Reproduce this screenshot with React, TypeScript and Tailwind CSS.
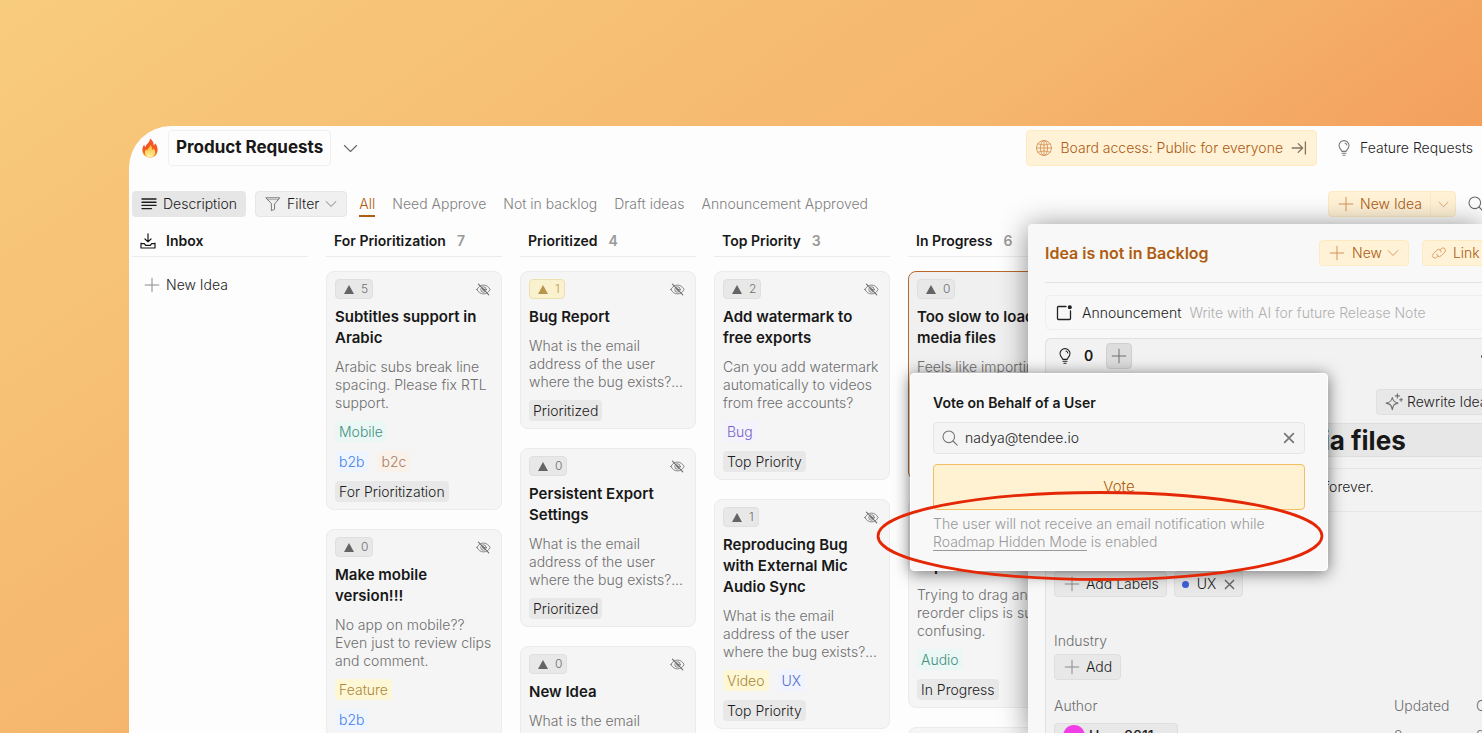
import React, { useState } from 'react';

type IconProps = { className?: string };

const Svg = ({ className = 'size-4', width = 1, children }: IconProps & { width?: number; children: React.ReactNode }) => (
  <svg
    viewBox="0 0 16 16"
    className={`shrink-0 ${className}`}
    fill="none"
    stroke="currentColor"
    strokeWidth={width}
    strokeLinecap="round"
    strokeLinejoin="round"
    aria-hidden="true"
  >
    {children}
  </svg>
);

const PlusIcon = ({ className }: IconProps) => (
  <Svg className={className}><path d="M8 1.2v13.6M1.2 8h13.6" /></Svg>
);

const ChevronIcon = ({ className }: IconProps) => (
  <Svg className={className} width={1.2}><path d="M1.5 4.8 8 11.2l6.5-6.4" /></Svg>
);

const CloseIcon = ({ className }: IconProps) => (
  <Svg className={className} width={1.9}><path d="m3 3 10 10M13 3 3 13" /></Svg>
);

const LinesIcon = ({ className }: IconProps) => (
  <Svg className={className} width={1.4}><path d="M1 3h14M1 6.2h14M1 9.4h14M1 12.6h9.5" /></Svg>
);

const FunnelIcon = ({ className }: IconProps) => (
  <Svg className={className}><path d="M1.2 1.8h13.6L9.6 8v5.2l-3.2 1.5V8z" /><path d="M2.6 3.6h10.8" strokeWidth=".5" /></Svg>
);

const InboxIcon = ({ className }: IconProps) => (
  <Svg className={className} width={1.2}>
    <path d="M8 .8v8M5 6l3 2.9L11 6M1 10v5h14v-5M1 10.6h3.4l1.2 1.8h4.8l1.2-1.8H15" />
  </Svg>
);

const GlobeIcon = ({ className }: IconProps) => (
  <Svg className={className} width={0.9}>
    <circle cx="8" cy="8" r="7.5" />
    <ellipse cx="8" cy="8" rx="3.6" ry="7.5" />
    <path d="M8 .5v15M.5 8h15M2 3.8c3.5 1.6 8.5 1.6 12 0M2 12.2c3.5-1.6 8.5-1.6 12 0" />
  </Svg>
);

const ArrowEndIcon = ({ className }: IconProps) => (
  <Svg className={className} width={1.3}><path d="M1.2 8h10.2M7.2 3.6 11.6 8l-4.4 4.4M14.4 2v12" /></Svg>
);

const BulbIcon = ({ className }: IconProps) => (
  <Svg className={className} width={1.1}>
    <path d="M5.9 11.4c0-1.6-2.9-2.6-2.9-5.8a5 5 0 0 1 10 0c0 3.2-2.9 4.2-2.9 5.8zM6 13.3h4M6.9 15.2h2.2M9.1 3.1c.9.3 1.5 1 1.6 1.9" />
  </Svg>
);

const SearchIcon = ({ className }: IconProps) => (
  <Svg className={className} width={1.1}><circle cx="6.8" cy="6.8" r="5.8" /><path d="m11 11 4.2 4.2" /></Svg>
);

const EyeOffIcon = ({ className }: IconProps) => (
  <Svg className={className} width={0.9}>
    <path d="M1 8c1.5-3 4-4.7 7-4.7S13.5 5 15 8c-1.5 3-4 4.7-7 4.7S2.5 11 1 8z" />
    <circle cx="8" cy="8" r="2.9" />
    <circle cx="8" cy="8" r="1" />
    <path d="m2.6 2.2 11 11.6" strokeWidth="1.2" />
  </Svg>
);

const LinkIcon = ({ className }: IconProps) => (
  <Svg className={className}>
    <path d="M6.8 11.6 5.4 13a2.8 2.8 0 0 1-4-4l4.2-4.2a2.8 2.8 0 0 1 4 0c.6.6.9 1.3.8 2.1M9.2 4.4 10.6 3a2.8 2.8 0 0 1 4 4l-4.2 4.2a2.8 2.8 0 0 1-4 0c-.6-.6-.9-1.3-.8-2.1" />
  </Svg>
);

const NoteIcon = ({ className }: IconProps) => (
  <Svg className={className} width={1.3}>
    <path d="M10 1.5H2.5a1 1 0 0 0-1 1v11a1 1 0 0 0 1 1h11a1 1 0 0 0 1-1V6" />
    <circle cx="13.8" cy="2.2" r="1.4" fill="currentColor" />
  </Svg>
);

const SparkleIcon = ({ className }: IconProps) => (
  <Svg className={className}>
    <path d="M6.5 4c.7 3.2 1.8 4.3 5 5-3.2.7-4.3 1.8-5 5.8-.7-4-1.8-5.1-5.5-5.8 3.7-.7 4.8-1.8 5.5-5zM11 .8v3.6M9.2 2.6h3.6M14.3 4.7v2.6M13 6h2.6" />
  </Svg>
);

const FlameIcon = () => (
  <svg viewBox="0 0 16 20" className="h-5 w-4 shrink-0" aria-hidden="true">
    <defs>
      <linearGradient id="flame" x1="0" y1="0" x2="0" y2="1">
        <stop offset="0" stopColor="#f2552c" />
        <stop offset=".6" stopColor="#f5581f" />
        <stop offset="1" stopColor="#fb9a24" />
      </linearGradient>
      <linearGradient id="flameCore" x1="0" y1="0" x2="0" y2="1">
        <stop offset="0" stopColor="#fdb52c" />
        <stop offset="1" stopColor="#fff3a0" />
      </linearGradient>
    </defs>
    <path d="M7.8.5c2.7 1.6 4 4 3.9 7 .8-.5 1.3-1.3 1.4-2.3 1.700 2 2.700 4.500 2.500 7.200-.3 4.300-3.500 7.100-7.600 7.100S.600 16.600.400 12.600c-.1-2.300.7-4.300 1.800-6 .1 1.200.5 2.100 1.200 2.700C3.800 5.800 8.200 4.800 7.800.5z" fill="url(#flame)" />
    <path d="M8.300 6.800c2 2.200 1.700 3.700 2.300 5.200.7-.4 1-1 1.200-1.700 1 1.500 1.600 3 1.200 4.900-.5 2.600-2.500 4-5 4s-4.700-1.400-5-4c-.2-1.700.3-3 1.100-4.200.2.900.6 1.500 1.200 1.800C5.300 10.400 8 9.800 8.300 6.800z" fill="url(#flameCore)" />
  </svg>
);

const tagColors: Record<string, string> = {
  Mobile: 'bg-[#ebf7f5] text-[#43917f]',
  Audio: 'bg-[#ebf7f5] text-[#43917f]',
  b2b: 'bg-[#eff5fe] text-[#3f80ea]',
  b2c: 'bg-[#faf1eb] text-[#a67c64]',
  Bug: 'bg-[#f4f2fd] text-[#7464c4]',
  Feature: 'bg-[#fef7d5] text-[#ab883c]',
  Video: 'bg-[#fef7d5] text-[#ab883c]',
  UX: 'bg-[#eff4fe] text-[#546dcb]',
};

type Idea = {
  votes: number;
  voted?: boolean;
  selected?: boolean;
  title: string;
  text: string;
  tags: string[][];
};

const question = 'What is the email address of the user where the bug exists?...';

const columns: { name: string; count: number; ideas: Idea[] }[] = [
  {
    name: 'For Prioritization',
    count: 7,
    ideas: [
      {
        votes: 5,
        title: 'Subtitles support in Arabic',
        text: 'Arabic subs break line spacing. Please fix RTL support.',
        tags: [['Mobile'], ['b2b', 'b2c'], ['For Prioritization']],
      },
      {
        votes: 0,
        title: 'Make mobile version!!!',
        text: 'No app on mobile?? Even just to review clips and comment.',
        tags: [['Feature'], ['b2b']],
      },
    ],
  },
  {
    name: 'Prioritized',
    count: 4,
    ideas: [
      { votes: 1, voted: true, title: 'Bug Report', text: question, tags: [['Prioritized']] },
      { votes: 0, title: 'Persistent Export Settings', text: question, tags: [['Prioritized']] },
      { votes: 0, title: 'New Idea', text: question, tags: [['Prioritized']] },
    ],
  },
  {
    name: 'Top Priority',
    count: 3,
    ideas: [
      {
        votes: 2,
        title: 'Add watermark to free exports',
        text: 'Can you add watermark automatically to videos from free accounts?',
        tags: [['Bug'], ['Top Priority']],
      },
      {
        votes: 1,
        title: 'Reproducing Bug with External Mic Audio Sync',
        text: question,
        tags: [['Video', 'UX'], ['Top Priority']],
      },
    ],
  },
  {
    name: 'In Progress',
    count: 6,
    ideas: [
      {
        votes: 0,
        selected: true,
        title: 'Too slow to load media files',
        text: 'Feels like importing heavier media takes forever.',
        tags: [['UX'], ['In Progress']],
      },
      {
        votes: 0,
        title: 'Timeline drag experience',
        text: 'Trying to drag and reorder clips is super confusing.',
        tags: [['Audio'], ['In Progress']],
      },
      { votes: 0, title: 'New Idea', text: question, tags: [['In Progress']] },
    ],
  },
];

const tabs = ['All', 'Need Approve', 'Not in backlog', 'Draft ideas', 'Announcement Approved'];

const IdeaCard = ({ idea }: { idea: Idea }) => (
  <article
    className={`rounded-lg border px-2 py-[7px] ${
      idea.selected ? 'border-[#b9682a] bg-[#f0f0f0]' : 'border-[#ebebeb] bg-[#f5f5f5]'
    }`}
  >
    <div className="flex items-center justify-between">
      <button
        className={`flex h-5 items-center gap-[7px] rounded border pr-1 pl-2 text-xs ${
          idea.voted ? 'border-[#ece0b0] bg-[#faf1cf] text-[#c09a50]' : 'border-[#dfdfdf] bg-[#e8e8e8] text-[#707070]'
        }`}
      >
        <svg viewBox="0 0 10 9" className={`h-[9px] w-[10px] ${idea.voted ? 'text-[#b8954d]' : 'text-[#646464]'}`} aria-hidden="true">
          <path d="M5 0 10 9H0z" fill="currentColor" />
        </svg>
        {idea.votes}
      </button>
      <EyeOffIcon className="mr-[2px] size-[15px] text-[#6f6f6f]" />
    </div>
    <h3 className="mt-[7px] text-[15px] leading-[21px] font-semibold text-[#181818]">{idea.title}</h3>
    <p className="mt-[10px] text-sm leading-[18px] text-[#6e6e6e]">{idea.text}</p>
    <div className="mt-[9px] flex flex-col gap-[9px]">
      {idea.tags.map((row, index) => (
        <div key={index} className="flex gap-[9px]">
          {row.map((tag) => (
            <span
              key={tag}
              className={`h-[21px] rounded px-1 text-sm leading-[21px] ${tagColors[tag] ?? 'bg-[#e8e8e8] text-[#1c1c1c]'}`}
            >
              {tag}
            </span>
          ))}
        </div>
      ))}
    </div>
  </article>
);

const VotePopover = () => {
  const [email, setEmail] = useState('nadya@tendee.io');

  return (
    <div className="absolute top-[149px] -left-[118px] w-[418px] rounded border border-[#fff] bg-[#f8f8f8] px-[22px] pt-5 pb-[19px] shadow-[0_2px_16px_rgba(0,0,0,0.55)]">
      <h2 className="text-sm leading-[18px] font-semibold text-[#181818]">Vote on Behalf of a User</h2>
      <div className="mt-[10px] flex h-8 items-center gap-[7px] rounded border border-[#e6e6e6] bg-[#f4f4f4] px-2 text-[#757575]">
        <SearchIcon />
        <input
          aria-label="User email"
          className="min-w-0 flex-1 bg-transparent text-sm text-[#1c1c1c] outline-none"
          value={email}
          onChange={(e) => setEmail(e.target.value)}
        />
        <button aria-label="Clear" onClick={() => setEmail('')}>
          <CloseIcon className="size-[14px]" />
        </button>
      </div>
      <button className="mt-[10px] h-[46px] w-full rounded border border-[#f5be62] bg-[#fff2d3] text-[15px] text-[#ad5a12]">
        Vote
      </button>
      <p className="mt-[5px] text-sm leading-[18px] text-[#999999]">
        The user will not receive an email notification while{' '}
        <a href="#roadmap" className="border-b border-[#999999]">Roadmap Hidden Mode</a> is enabled
      </p>
      <svg viewBox="0 0 448 92" className="pointer-events-none absolute top-[116px] -left-[35px] h-[92px] w-[448px]" fill="none" aria-hidden="true">
        <ellipse cx="224" cy="46" rx="222" ry="43.5" stroke="#e42806" strokeWidth="2.8" />
      </svg>
    </div>
  );
};

const IdeaPanel = () => (
  <aside className="absolute top-[224px] right-0 bottom-0 w-[454px] rounded-tl bg-[#f8f8f8] shadow-[0_2px_28px_rgba(0,0,0,0.45)]">
    <div className="h-full overflow-hidden pt-4 pl-[17px] whitespace-nowrap">
      <div className="flex h-[43px] items-start border-b border-[#e3e3e3]">
        <h2 className="w-[274px] shrink-0 text-base leading-[26px] font-semibold text-[#b05c10]">Idea is not in Backlog</h2>
        <button className="flex h-[26px] shrink-0 items-center gap-[7px] rounded border border-[#fdeac0] bg-[#fff2d6] px-[9px] text-sm text-[#ad5a12]">
          <PlusIcon className="size-4 text-[#d5945a]" />
          New
          <ChevronIcon className="-ml-[2px] size-3 text-[#d5945a]" />
        </button>
        <button className="ml-[13px] flex h-[26px] w-[90px] shrink-0 items-center gap-[7px] rounded border border-[#fdeac0] bg-[#fff2d6] px-[9px] text-sm text-[#ad5a12]">
          <LinkIcon className="size-[14px] text-[#d5945a]" />
          Link
        </button>
      </div>

      <div className="mt-3 flex h-[35px] items-center rounded-l-md border border-r-0 border-[#eeeeee] pl-[10px] text-sm">
        <NoteIcon className="size-4 text-[#222]" />
        <label htmlFor="announcement" className="ml-[10px] text-[#1c1c1c]">Announcement</label>
        <input
          id="announcement"
          className="ml-2 min-w-0 flex-1 bg-transparent outline-none placeholder:text-[#b0b0b0]"
          placeholder="Write with AI for future Release Note"
        />
      </div>

      <div className="mt-2 h-full rounded-tl-md border-t border-l border-[#e0e0e0] bg-[#f2f2f2] pt-1 pl-2">
        <div className="flex h-[26px] items-center">
          <BulbIcon className="ml-[3px] size-4 text-[#222]" />
          <span className="ml-[11px] text-sm font-semibold text-[#181818]">0</span>
          <button aria-label="Add vote" className="ml-[13px] flex size-[26px] items-center justify-center rounded border border-[#cfcfcf] bg-[#dddddd] text-[#6f6f6f]">
            <PlusIcon />
          </button>
          <button aria-label="More actions" className="-mr-[14px] ml-auto flex gap-[3px]">
            <span className="size-[3px] rounded-full bg-[#444]" />
            <span className="size-[3px] rounded-full bg-[#444]" />
            <span className="size-[3px] rounded-full bg-[#444]" />
          </button>
        </div>
        <div className="mt-5 flex justify-end">
          <button className="flex h-[26px] w-[106px] items-center gap-1 rounded-l border border-r-0 border-[#e0e0e0] bg-[#e8e8e8] pl-2 text-sm text-[#1c1c1c]">
            <SparkleIcon className="size-[18px] text-[#6f6f6f]" />
            Rewrite Idea
          </button>
        </div>
        <input
          aria-label="Idea title"
          className="mt-2 block h-[34px] w-full border-y border-[#dedede] bg-[#e7e7e7] pl-[2px] text-[26px] font-bold text-[#181818] outline-none"
          defaultValue="Too slow to load media files"
        />
        <p className="mt-[11px] h-[44px] border-y border-[#e6e6e6] pl-[7px] text-sm leading-9 text-[#1c1c1c]">
          Feels like importing heavier media takes forever.
        </p>
        <div className="mt-[59px] flex gap-[7px]">
          <button className="flex h-[26px] items-center gap-[6px] rounded border border-[#dedede] bg-[#e8e8e8] pr-[7px] pl-[9px] text-sm text-[#1c1c1c]">
            <PlusIcon className="size-4 text-[#8a8a8a]" />
            Add Labels
          </button>
          <button className="flex h-[26px] items-center rounded border border-[#dedede] bg-[#e8e8e8] px-[6px] text-sm text-[#1c1c1c]">
            <span className="mr-2 ml-[1px] size-[7px] rounded-full bg-[#3e5fd7]" />
            UX
            <CloseIcon className="ml-[7px] size-[13px] text-[#6a6a6a]" />
          </button>
        </div>
        <div className="mt-[35px] text-sm leading-[18px] text-[#6e6e6e]">Industry</div>
        <button className="mt-1 flex h-[26px] items-center gap-[6px] rounded border border-[#dedede] bg-[#e8e8e8] pr-2 pl-[9px] text-sm text-[#1c1c1c]">
          <PlusIcon className="size-4 text-[#8a8a8a]" />
          Add
        </button>
        <div className="mt-[17px] flex text-sm leading-[18px] text-[#6e6e6e]">
          <div className="w-[340px] shrink-0">
            <div>Author</div>
            <button className="mt-2 flex h-[26px] w-[124px] items-center gap-1 rounded border border-[#dedede] bg-[#e8e8e8] pl-2 font-medium text-[#222]">
              <span className="size-[22px] rounded-full bg-[#f03ee6]" />
              User 2011
            </button>
          </div>
          <div className="w-[82px] shrink-0">
            <div>Updated</div>
            <div className="mt-3">2 mo ago</div>
          </div>
          <div className="shrink-0">
            <div>Created</div>
            <div className="mt-3">2 mo ago</div>
          </div>
        </div>
      </div>
    </div>
    <VotePopover />
  </aside>
);

export default function App() {
  const [activeTab, setActiveTab] = useState('All');

  return (
    <div className="relative flex h-screen flex-col overflow-hidden bg-linear-[145deg] from-[#f8cc7d] via-[#f5b66d] via-45% to-[#f07b42] pt-[126px] pl-[129px] font-['Inter',sans-serif] font-[350]">
      <main className="flex min-h-0 flex-1 flex-col overflow-hidden rounded-tl-[42px] bg-[#fdfdfd] pl-[3px] whitespace-nowrap">
        <header className="flex h-[44px] shrink-0 items-center pl-[10px]">
          <FlameIcon />
          <h1 className="ml-[10px] flex h-9 items-center rounded border border-[#f0f0f0] px-[7px] text-[17px] font-bold text-[#181818]">
            Product Requests
          </h1>
          <button aria-label="Switch board" className="ml-3 text-[#6a6a6a]">
            <ChevronIcon className="size-[15px]" />
          </button>
          <button className="ml-auto flex h-9 items-center gap-2 rounded border border-[#fdeac0] bg-[#fff2d6] px-[9px] text-sm text-[#ad5a12]">
            <GlobeIcon className="size-4 text-[#d5945a]" />
            Board access: Public for everyone
            <ArrowEndIcon className="size-4 text-[#807460]" />
          </button>
          <a href="#feature-requests" className="mr-[9px] ml-[19px] flex items-center gap-2 text-sm text-[#1c1c1c]">
            <BulbIcon className="size-4 text-[#7a7a7a]" />
            Feature Requests
          </a>
        </header>

        <div className="mt-[21px] flex h-[26px] shrink-0 items-center text-sm">
          <button className="flex h-[26px] items-center gap-[6px] rounded bg-[#e6e6e6] px-[9px] text-[#1c1c1c]">
            <LinesIcon className="size-4" />
            Description
          </button>
          <button className="ml-[9px] flex h-[26px] items-center gap-[6px] rounded border border-[#e6e6e6] bg-[#f0f0f0] px-[9px] text-[#1c1c1c]">
            <FunnelIcon className="size-4 text-[#777]" />
            Filter
            <ChevronIcon className="size-3 text-[#777]" />
          </button>
          <nav className="ml-3 flex h-full gap-[17px]">
            {tabs.map((tab) => (
              <button
                key={tab}
                onClick={() => setActiveTab(tab)}
                className={`border-b-2 pt-[2px] ${tab === activeTab ? 'border-[#b05c10] text-[#b05c10]' : 'border-transparent text-[#808080]'}`}
              >
                {tab}
              </button>
            ))}
          </nav>
          <div className="ml-auto flex h-[26px] items-stretch rounded border border-[#fdeac0] bg-[#fff2d6] text-[#ad5a12]">
            <button className="flex items-center gap-[6px] border-r border-[#fdeac0] pr-2 pl-[9px]">
              <PlusIcon className="size-4 text-[#d5945a]" />
              New Idea
            </button>
            <button aria-label="More" className="flex w-6 items-center justify-center text-[#d5945a]">
              <ChevronIcon className="size-[11px]" />
            </button>
          </div>
          <button aria-label="Search" className="-mr-[2px] ml-3 text-[#6a6a6a]">
            <SearchIcon className="size-4" />
          </button>
        </div>

        <div className="mt-2 flex min-h-0 flex-1 gap-[18px]">
          <section className="w-[176px] shrink-0">
            <h2 className="flex h-8 items-center gap-[10px] border-b border-[#ececec] pl-2 text-sm font-semibold text-[#181818]">
              <InboxIcon className="size-4" />
              Inbox
            </h2>
            <button className="mt-[18px] flex items-center gap-[6px] pl-3 text-sm text-[#1c1c1c]">
              <PlusIcon className="size-4 text-[#8a8a8a]" />
              New Idea
            </button>
          </section>
          {columns.map((column) => (
            <section key={column.name} className="w-[176px] shrink-0 whitespace-normal">
              <h2 className="flex h-8 items-center gap-[11px] border-b border-[#ececec] pl-2 text-sm font-semibold text-[#181818]">
                {column.name}
                <span className="text-[#999]">{column.count}</span>
              </h2>
              <div className="mt-[14px] flex flex-col gap-[19px]">
                {column.ideas.map((idea, index) => (
                  <IdeaCard key={index} idea={idea} />
                ))}
              </div>
            </section>
          ))}
        </div>
      </main>
      <IdeaPanel />
    </div>
  );
}
